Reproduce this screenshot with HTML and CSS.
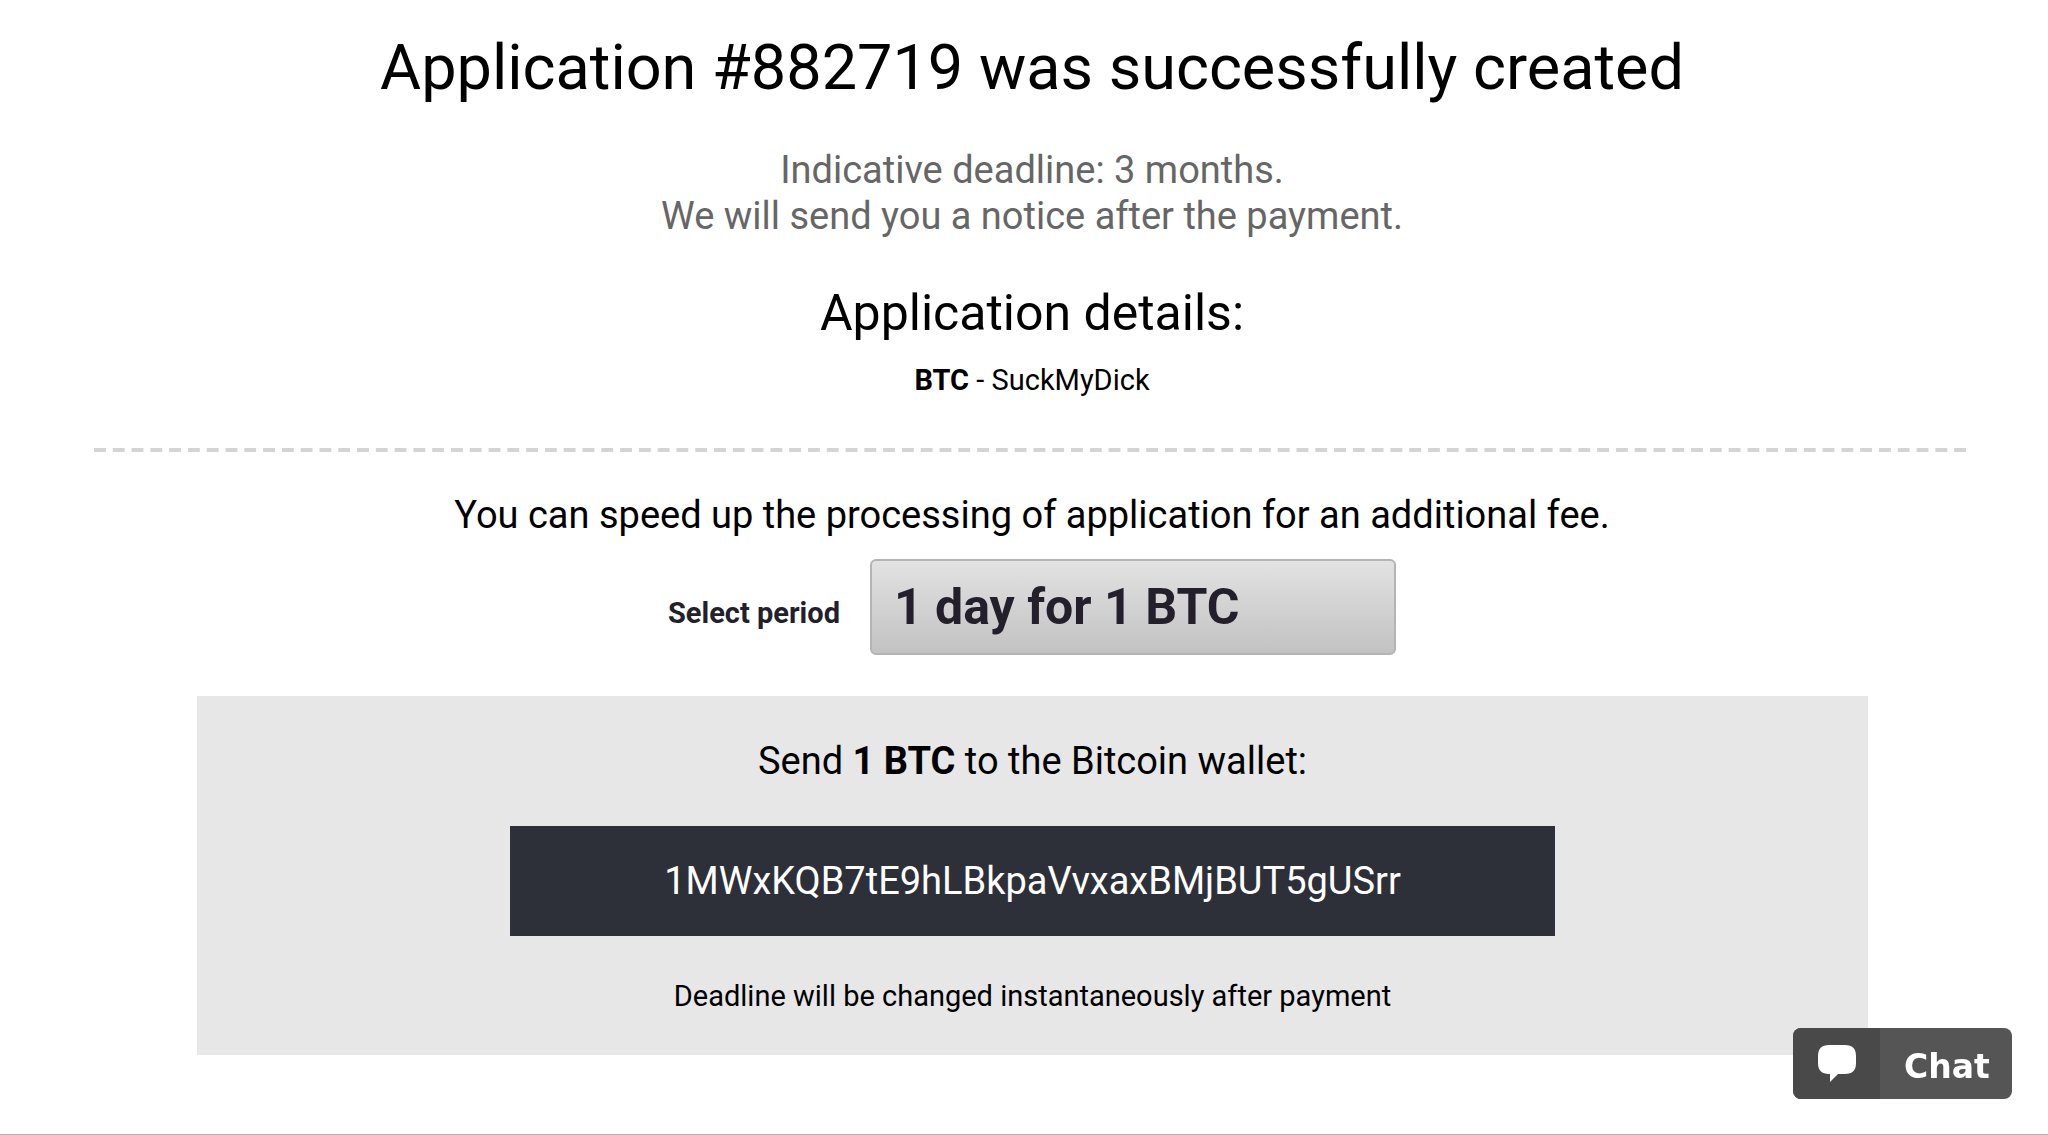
FILE: index.html
```html
<!DOCTYPE html>
<html lang="en">
  <head>
    <meta charset="utf-8">
    <title>Application created</title>
    <meta name="viewport" content="width=device-width, initial-scale=1.0">
    <link rel="stylesheet" href="styles.css">
  </head>
  <body>
    <main class="page">
      <section class="application">
        <h1>Application #882719 was successfully created</h1>
        <p class="deadline">Indicative deadline: 3 months.<br>We will send you a notice after the payment.</p>
        <h2>Application details:</h2>
        <p class="details"><b>BTC</b> - SuckMyDick</p>
      </section>

      <div class="divider">
        <svg width="100%" height="4" aria-hidden="true"><line x1="0" y1="2" x2="100%" y2="2" pathLength="1893"/></svg>
      </div>

      <form class="speed-up">
        <p class="lead">You can speed up the processing of application for an additional fee.</p>
        <div class="period">
          <label for="period">Select period</label>
          <select id="period" name="period">
            <option>1 day for 1 BTC</option>
          </select>
        </div>
      </form>

      <section class="payment">
        <p class="lead">Send <b>1 BTC</b> to the Bitcoin wallet:</p>
        <div class="wallet">1MWxKQB7tE9hLBkpaVvxaxBMjBUT5gUSrr</div>
        <p class="note">Deadline will be changed instantaneously after payment</p>
      </section>
    </main>

    <button type="button" class="chat">
      <span class="chat-icon">
        <svg width="38" height="37" viewBox="0 0 38 37" aria-hidden="true">
          <path fill="#fff" d="M11 0H27Q38 0 38 11V18Q38 29 27 29H20L12 37V29H11Q0 29 0 18V11Q0 0 11 0Z"/>
        </svg>
      </span>
      <span class="chat-text">Chat</span>
    </button>
  </body>
</html>
```

FILE: styles.css
```css
* {
  box-sizing: border-box;
}
body {
  margin: 0;
  min-height: 100vh;
  border-bottom: 1px solid #b0b0b0;
  background-color: #fff;
  color: #000;
  font-family: Roboto, sans-serif;
  text-align: center;
}
h1, h2, p {
  margin: 0;
  font-weight: 400;
}
.page {
  padding: 26px 78px 0 94px;
}
h1 {
  font-size: 63px;
  line-height: 84px;
}
.deadline {
  margin-top: 37px;
  color: #666;
  font-size: 38px;
  line-height: 46px;
}
h2 {
  margin-top: 40px;
  font-size: 50px;
  line-height: 68px;
}
.details {
  margin-top: 11px;
  font-size: 29px;
  line-height: 44px;
}
.divider {
  margin-top: 46px;
  padding-right: 4px;
}
.divider svg {
  display: block;
}
.divider line {
  stroke: #d4d4d4;
  stroke-width: 4;
  stroke-dasharray: 12 7;
}
.lead {
  font-size: 38px;
  line-height: 46px;
}
.speed-up {
  margin-top: 40px;
}
.period {
  display: flex;
  justify-content: center;
  align-items: center;
  gap: 30px;
  margin-top: 21px;
}
.period label {
  padding-top: 12px;
  color: #231f2b;
  font-size: 29px;
  font-weight: 700;
}
.period select {
  appearance: none;
  width: 526px;
  height: 96px;
  padding: 0 22px;
  border: 2px solid #b4b4b4;
  border-radius: 6px;
  background: linear-gradient(#e2e2e2, #c2c2c2);
  color: #231f2b;
  font: 700 50px Roboto, sans-serif;
}
.payment {
  margin: 41px 102px 0 103px;
  padding: 42px 0 37px;
  background-color: #e7e7e7;
}
.wallet {
  width: 1045px;
  max-width: 100%;
  margin: 42px auto 0;
  padding: 32px 0;
  background-color: #2d3039;
  color: #fff;
  font-size: 38px;
  line-height: 46px;
}
.note {
  margin-top: 38px;
  font-size: 29px;
  line-height: 44px;
}
.chat {
  position: fixed;
  right: 36px;
  bottom: 36px;
  display: flex;
  width: 219px;
  height: 71px;
  padding: 0;
  border: 0;
  border-radius: 8px;
  overflow: hidden;
  background-color: #555;
  color: #fff;
  cursor: pointer;
}
.chat-icon {
  display: flex;
  justify-content: center;
  align-items: center;
  width: 87px;
  height: 71px;
  background-color: #494949;
}
.chat-text {
  flex: 1;
  padding-left: 2px;
  font: 700 33px/78px "DejaVu Sans", sans-serif;
}
```
